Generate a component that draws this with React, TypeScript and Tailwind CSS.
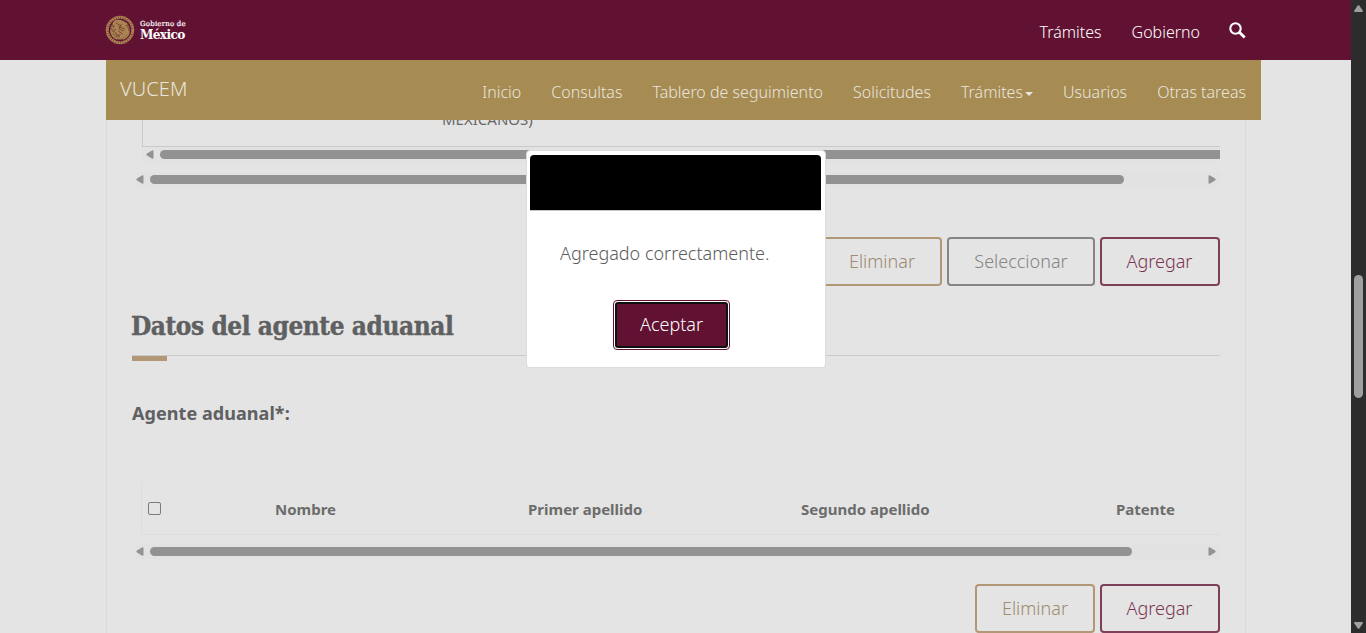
import type { ReactNode } from 'react';

const outline = {
  gold: 'w-[120px] border-[#b19776] text-[#9d8a70]',
  gray: 'w-[148px] border-[#858585] text-[#858585]',
  wine: 'w-[120px] border-[#7e4058] pr-[1px] text-[#7a3552]',
};

function OutlineButton({ kind, children }: { kind: keyof typeof outline; children: ReactNode }) {
  return (
    <button className={`h-[49px] shrink-0 rounded-[4px] border-2 text-[18px] font-light leading-[45px] ${outline[kind]}`}>
      {children}
    </button>
  );
}

function Arrow({ dir }: { dir: 'left' | 'right' }) {
  return (
    <svg width="8" height="9" viewBox="0 0 8 9" className="shrink-0 fill-[#929292]">
      <path
        d={dir === 'left' ? 'M6.3.2Q7.3 0 7.5 1V8Q7.3 9 6.3 8.8L.6 5.2Q0 4.5.6 3.8Z' : 'M1.7.2Q.7 0 .5 1V8Q.7 9 1.7 8.8L7.4 5.2Q8 4.5 7.4 3.8Z'}
      />
    </svg>
  );
}

function HScroll({ thumb }: { thumb: string }) {
  return (
    <div className="flex h-[15px] w-[1085px] items-center bg-[#e2e2e2] pl-[1px]">
      <Arrow dir="left" />
      <div className={`ml-[6px] h-[9px] rounded-full bg-[#929292] ${thumb}`} />
      <div className="ml-auto mr-[4px] flex">
        <Arrow dir="right" />
      </div>
    </div>
  );
}

function Seal() {
  return (
    <svg width="30" height="30" viewBox="0 0 30 30" fill="none" stroke="#a8834f">
      <circle cx="15" cy="15" r="12.6" strokeWidth="2.8" strokeDasharray="2 .4" />
      <circle cx="15" cy="15" r="13.9" strokeWidth=".7" />
      <circle cx="15" cy="15" r="10" fill="#8a5c42" stroke="none" />
      <path
        d="M9 6.5Q14 3.5 18 7L22 9L19 9.5Q23 12 23 17L20 21L15 22L17 18L13 19L10 16L13 14L9 13L11 11L8 9Z"
        fill="#a8834f"
        stroke="#b8935c"
        strokeWidth=".7"
      />
      <path d="M11 8L16 11L14 14L19 16M17 9L14 12L20 14M13 16L18 19" stroke="#713036" strokeWidth=".7" />
      <path d="M6 15Q6 22 12 24M24 16Q24 22 18 24M7 18L10 18M8 21L11 20M23 19L20 19M22 22L19 20M10 23L20 23M6.5 12L9 15" strokeWidth="1.4" />
    </svg>
  );
}

const menu = ['Inicio', 'Consultas', 'Tablero de seguimiento', 'Solicitudes', 'Trámites', 'Usuarios', 'Otras tareas'];

export default function App() {
  return (
    <div className="relative flex h-[633px] w-[1366px] overflow-hidden bg-[#e4e4e4] font-['Noto_Sans',sans-serif]">
      <main className="h-full w-[1351px] overflow-hidden">
        <header className="flex h-[60px] items-center bg-[#611232] pl-[105px] pr-[104px] text-white">
          <Seal />
          <div className="-mt-px ml-[5px] flex w-[60px] flex-col whitespace-nowrap font-['DejaVu_Serif',serif]">
            <span className="text-[7px] leading-[9px] tracking-[0.2px] [-webkit-text-stroke:0.2px_white]">Gobierno de</span>
            <span className="font-['DejaVu_Serif',serif] text-[13.5px] font-bold leading-[10px] tracking-[-0.65px] [font-stretch:condensed]">México</span>
          </div>
          <nav className="ml-auto flex items-center gap-[30px] pt-[4px] text-[16px] font-light">
            <a>Trámites</a>
            <a>Gobierno</a>
            <svg width="17" height="17" viewBox="0 0 17 17" fill="none" stroke="#fff" className="-ml-px -mt-[3px] mr-px">
              <circle cx="6.5" cy="6.5" r="5.2" strokeWidth="2.1" />
              <path d="M10.3 10.3L15.7 15.5" strokeWidth="2.9" />
            </svg>
          </nav>
        </header>

        <div className="ml-[106px] flex h-[60px] w-[1155px] items-center bg-[#a68c53] pl-[14px] pr-[15px] text-[#e8e5df]">
          <span className="pb-[2px] text-[20px] font-light tracking-[0.1px]">VUCEM</span>
          <nav className="ml-auto flex gap-[30px] pt-[4px] text-[16px] font-light">
            {menu.map((item) => (
              <a key={item} className="flex items-center whitespace-nowrap">
                {item}
                {item === 'Trámites' && (
                  <span className="ml-[2px] mt-[3px] border-x-4 border-t-4 border-x-transparent border-t-[#e8e5df]" />
                )}
              </a>
            ))}
          </nav>
        </div>

        <div className="ml-[106px] h-[513px] w-[1140px] border-x border-[#d9d9d9] pl-[25px] pr-[25px] text-[#5f6061]">
          <div className="ml-[10px] h-[27px] overflow-hidden border-b border-l border-[#cacaca] pl-[299px]">
            <div className="-mt-[11px] text-[15px] leading-[20px] text-[#696969]">MEXICANOS)</div>
          </div>
          <div className="ml-[10px] flex h-[15px] items-center overflow-hidden bg-[#e2e2e2] pl-[4px]">
            <Arrow dir="left" />
            <div className="ml-[6px] h-[9px] flex-1 rounded-l-full bg-[#929292]" />
          </div>
          <div className="ml-[3px] mt-[10px]">
            <HScroll thumb="w-[974px]" />
          </div>

          <div className="mt-[50px] flex justify-end gap-[5px]">
            <OutlineButton kind="gold">Eliminar</OutlineButton>
            <OutlineButton kind="gray">Seleccionar</OutlineButton>
            <OutlineButton kind="wine">Agregar</OutlineButton>
          </div>

          <h2 className="-ml-px mt-[21px] h-[49px] whitespace-nowrap font-['DejaVu_Serif',serif] text-[26px] font-bold leading-[39px] tracking-[-0.46px] [-webkit-text-stroke:0.4px_#5f6061] [font-stretch:condensed]">
            Datos del agente aduanal
          </h2>
          <div className="-mt-px h-px bg-[#cacaca]" />
          <div className="h-[5px] w-[35px] bg-[#b19776]" />
          <div className="mt-[39px] text-[18px] font-bold leading-[26px] tracking-[0.06px]">Agente aduanal*:</div>

          <div className="ml-[9px] mt-[57px] flex h-[52px] items-center border-b border-l border-[#dddddd] text-[15px] font-bold text-[#6c6c6c]">
            <span className="ml-[6px] h-[13px] w-[13px] rounded-[2px] border border-[#7b7b7b]" />
            <span className="ml-[114px] w-[253px] pt-[2px]">Nombre</span>
            <span className="w-[273px] pt-[2px]">Primer apellido</span>
            <span className="w-[315px] pt-[2px]">Segundo apellido</span>
            <span className="pt-[2px]">Patente</span>
          </div>
          <div className="ml-[3px] mt-[9px]">
            <HScroll thumb="w-[982px]" />
          </div>
          <div className="mt-[25px] flex justify-end gap-[5px]">
            <OutlineButton kind="gold">Eliminar</OutlineButton>
            <OutlineButton kind="wine">Agregar</OutlineButton>
          </div>
        </div>
      </main>

      <aside className="flex h-full w-[15px] flex-col items-center bg-[#2c2c2c]">
        <svg width="9" height="8" viewBox="0 0 9 8" className="mt-[5px] fill-[#9f9f9f]">
          <path d="M3.7.5Q4.5-.2 5.3.5L8.8 5.7Q9.2 7 8 7H1Q-.2 7 .2 5.7Z" />
        </svg>
        <div className="mt-[262px] h-[123px] w-[9px] rounded-full bg-[#9f9f9f]" />
        <svg width="9" height="8" viewBox="0 0 9 8" className="mb-[3px] mt-auto fill-[#9f9f9f]">
          <path d="M3.7 6.5Q4.5 7.2 5.3 6.5L8.8 1.3Q9.2 0 8 0H1Q-.2 0 .2 1.3Z" />
        </svg>
      </aside>

      <div
        role="dialog"
        className="absolute left-[526px] top-[150px] flex h-[218px] w-[300px] flex-col rounded-[4px] border border-[#dddddd] bg-white p-[3px] pt-[4px] text-[#5c5c5c]"
      >
        <div className="h-[56px] w-[291px] rounded-t-[4px] border-b border-[#c5c5c5] bg-black" />
        <p className="ml-[30px] mt-[28px] whitespace-nowrap text-[18px] font-light leading-[28px]">Agregado correctamente.</p>
        <div className="ml-[83px] mt-[33px] h-[50px] w-[117px] rounded-[4px] border border-[#611232] bg-white p-[1px]">
          <button className="h-full w-full rounded-[3px] border-2 border-[#101010] bg-[#611232] pb-[2px] text-[18px] font-light leading-[40px] text-white">
            Aceptar
          </button>
        </div>
      </div>
    </div>
  );
}
